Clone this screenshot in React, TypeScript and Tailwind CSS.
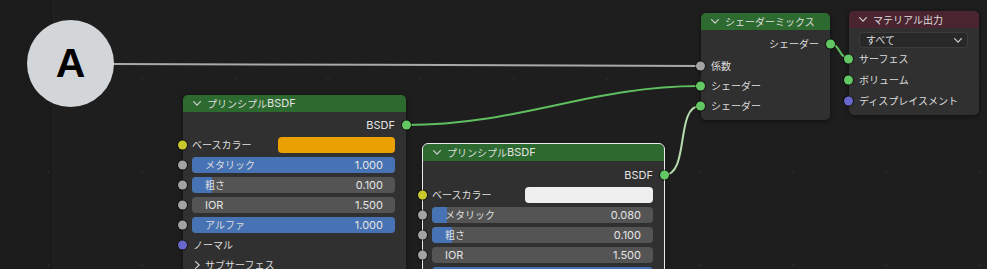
import React from "react";

const JP = "font-['Noto_Sans_CJK_JP','Noto_Sans_CJK_SC',sans-serif] text-[10px] leading-none text-[#dedede]";
const LT = "font-['Inter','Noto_Sans_CJK_JP',sans-serif] text-[11px] leading-none text-[#e4e4e4]";

type SC = "gray" | "green" | "yellow" | "purple";
const socketCls: Record<SC, string> = {
  gray: "bg-[#a3a3a3]",
  green: "bg-[#63c763]",
  yellow: "bg-[#c9c92c]",
  purple: "bg-[#6868cc]",
};

function Socket({ color, side }: { color: SC; side: "left" | "right" }) {
  return (
    <span
      className={`absolute top-1/2 -translate-y-1/2 w-[9px] h-[9px] rounded-full ring-1 ring-black/50 z-10 ${socketCls[color]} ${
        side === "left" ? "left-[-5px]" : "right-[-5px]"
      }`}
    />
  );
}

function ChevronDown({ color = "#cfcfcf" }: { color?: string }) {
  return (
    <svg width="8" height="5" viewBox="0 0 8 5" className="shrink-0">
      <polyline points="0.6,0.6 4,4.2 7.4,0.6" fill="none" stroke={color} strokeWidth="1.2" strokeLinecap="round" strokeLinejoin="round" />
    </svg>
  );
}

function ChevronRight() {
  return (
    <svg width="5" height="8" viewBox="0 0 5 8" className="shrink-0">
      <polyline points="0.6,0.6 4.2,4 0.6,7.4" fill="none" stroke="#cfcfcf" strokeWidth="1.2" strokeLinecap="round" strokeLinejoin="round" />
    </svg>
  );
}

function Header({ children, color }: { children: React.ReactNode; color: string }) {
  return (
    <div className={`h-[17px] rounded-t-[5px] flex items-center pl-[10px] gap-[6px] ${color}`}>
      <ChevronDown />
      <div className="flex items-center">{children}</div>
    </div>
  );
}

function OutputRow({ label, jp, color }: { label: string; jp?: boolean; color: SC }) {
  return (
    <div className="relative h-[20px] flex items-center justify-end pr-[11px]">
      <span className={jp ? JP : LT}>{label}</span>
      <Socket color={color} side="right" />
    </div>
  );
}

function InputRow({ label, color, h = "h-[20px]" }: { label: string; color: SC; h?: string }) {
  return (
    <div className={`relative ${h} flex items-center pl-[10px]`}>
      <Socket color={color} side="left" />
      <span className={JP}>{label}</span>
    </div>
  );
}

function ColorRow({ swatch, w }: { swatch: string; w: string }) {
  return (
    <div className="relative h-[20px] flex items-center pl-[9px] pr-[11px]">
      <Socket color="yellow" side="left" />
      <span className={JP}>ベースカラー</span>
      <div className={`ml-auto h-[16px] rounded-[4px] ${w} ${swatch}`} />
    </div>
  );
}

function Field({ label, value, pct, jp = true }: { label: string; value: string; pct: number; jp?: boolean }) {
  return (
    <div className="relative h-[20px] flex items-center">
      <Socket color="gray" side="left" />
      <div className="relative ml-[9px] mr-[11px] flex-1 h-[16px] rounded-[4px] bg-[#545454] overflow-hidden">
        <div className="absolute inset-y-0 left-0 bg-[#4772b3]" style={{ width: `${pct}%` }} />
        <div className="relative h-full flex items-center justify-between pl-[13px] pr-[12px]">
          <span className={jp ? JP : LT}>{label}</span>
          <span className={LT}>{value}</span>
        </div>
      </div>
    </div>
  );
}

function BSDFTitle() {
  return (
    <>
      <span className={JP}>プリンシプル</span>
      <span className={LT}>BSDF</span>
    </>
  );
}

export default function App() {
  return (
    <div className="relative w-[987px] h-[269px] overflow-hidden bg-[linear-gradient(to_right,#1b1b1b_53px,#222222_53px,#222222_54px,#1e1e1e_54px)]">
      {/* faint grid dots */}
      <div className="absolute inset-0 bg-[radial-gradient(circle,#2c2c2c_0.8px,transparent_1.4px)] bg-[length:93px_93px] bg-[position:2.5px_32.5px]" />

      {/* wires */}
      <svg className="absolute inset-0" width="987" height="269" viewBox="0 0 987 269">
        <path d="M113,64 C300,64 520,66 700,66" fill="none" stroke="#a9a9a9" strokeWidth="2" />
        <path d="M406,125 C520,125 590,86 700,86" fill="none" stroke="#5fbf5f" strokeWidth="2" />
        <path d="M664,175 C690,175 675,106 700,106" fill="none" stroke="#b6dcae" strokeWidth="2" />
        <path d="M830,44 C841,44 838,58 849,58" fill="none" stroke="#5fbf5f" strokeWidth="2" />
      </svg>

      {/* Node 1: Principled BSDF */}
      <div className="absolute left-[183px] top-[95px] w-[223px] rounded-[5px] bg-[#303030] shadow-[0_1px_5px_rgba(0,0,0,0.55)]">
        <Header color="bg-[#2d6a2f]">
          <BSDFTitle />
        </Header>
        <div className="pt-[3px] flex flex-col">
          <OutputRow label="BSDF" color="green" />
          <ColorRow swatch="bg-[#e9a000]" w="w-[117px]" />
          <Field label="メタリック" value="1.000" pct={100} />
          <Field label="粗さ" value="0.100" pct={10} />
          <Field label="IOR" value="1.500" pct={0} jp={false} />
          <Field label="アルファ" value="1.000" pct={100} />
          <InputRow label="ノーマル" color="purple" />
          <div className="relative h-[20px] flex items-center pl-[12px] gap-[5px]">
            <ChevronRight />
            <span className={JP}>サブサーフェス</span>
          </div>
          <div className="h-[40px]" />
        </div>
      </div>

      {/* Node 2: Principled BSDF (active) */}
      <div className="absolute left-[423px] top-[144px] w-[241px] rounded-[5px] bg-[#303030] outline outline-1 outline-[#ececec] shadow-[0_1px_5px_rgba(0,0,0,0.55)]">
        <Header color="bg-[#2d6a2f]">
          <BSDFTitle />
        </Header>
        <div className="pt-[4px] flex flex-col">
          <OutputRow label="BSDF" color="green" />
          <ColorRow swatch="bg-[#efefef]" w="w-[128px]" />
          <Field label="メタリック" value="0.080" pct={7} />
          <Field label="粗さ" value="0.100" pct={9} />
          <Field label="IOR" value="1.500" pct={0} jp={false} />
          <Field label="アルファ" value="1.000" pct={100} />
          <div className="h-[40px]" />
        </div>
      </div>

      {/* Node 3: Mix Shader */}
      <div className="absolute left-[701px] top-[13px] w-[129px] rounded-[5px] bg-[#303030] shadow-[0_1px_5px_rgba(0,0,0,0.55)]">
        <Header color="bg-[#2d6a2f]">
          <span className={JP}>シェーダーミックス</span>
        </Header>
        <div className="pt-[4px] pb-[4px] flex flex-col">
          <OutputRow label="シェーダー" jp color="green" />
          <div className="h-[2px]" />
          <InputRow label="係数" color="gray" />
          <InputRow label="シェーダー" color="green" />
          <InputRow label="シェーダー" color="green" />
        </div>
      </div>

      {/* Node 4: Material Output */}
      <div className="absolute left-[849px] top-[11px] w-[130px] rounded-[5px] bg-[#303030] shadow-[0_1px_5px_rgba(0,0,0,0.55)]">
        <Header color="bg-[#4a242f]">
          <span className={JP}>マテリアル出力</span>
        </Header>
        <div className="pt-[4px] pb-[4px] flex flex-col">
          <div className="ml-[10px] mr-[11px] h-[16px] rounded-[4px] bg-[#282828] border border-[#3c3c3c] flex items-center justify-between pl-[6px] pr-[5px]">
            <span className={JP}>すべて</span>
            <ChevronDown color="#d0d0d0" />
          </div>
          <InputRow label="サーフェス" color="green" h="h-[21px]" />
          <InputRow label="ボリューム" color="green" h="h-[21px]" />
          <InputRow label="ディスプレイスメント" color="purple" h="h-[21px]" />
        </div>
      </div>

      {/* Annotation circle */}
      <div className="absolute left-[27px] top-[20px] w-[87px] h-[87px] rounded-full bg-[#d3d6d9] flex items-center justify-center">
        <span className="font-['Liberation_Sans',sans-serif] font-bold text-[41px] leading-none text-black">A</span>
      </div>
    </div>
  );
}
